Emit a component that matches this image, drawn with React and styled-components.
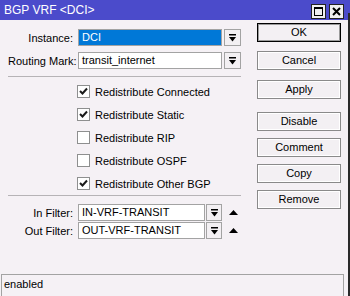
import React from "react";
import styled, { createGlobalStyle } from "styled-components";

const GlobalStyle = createGlobalStyle`
  html, body {
    margin: 0;
    padding: 0;
    background: #f5f1f5;
    font-family: "Liberation Sans", Arial, sans-serif;
    font-size: 11px;
    color: #000;
    overflow: hidden;
  }
`;

const Screen = styled.div`
  display: flex;
  width: 350px;
  height: 296px;
  overflow: hidden;
`;

const Window = styled.div`
  width: 348px;
  display: flex;
  flex-direction: column;
  background: #f5f1f5;
`;

const EdgeStrip = styled.div`
  width: 2px;
  background: linear-gradient(#4b4bcb 13px, #2a2a2a 13px);
`;

const TitleBar = styled.div`
  height: 20px;
  flex: none;
  background: #4b4bcb;
  color: #fff;
  display: flex;
  align-items: center;
  padding-left: 4px;
  font-size: 12px;
  .title {
    flex: 1;
  }
`;

const TitleButton = styled.div`
  width: 13px;
  height: 13px;
  margin-right: 3px;
  margin-top: 2px;
  background: #f0f0f0;
  border: 1px solid #222;
  display: flex;
  align-items: center;
  justify-content: center;
  &:last-child {
    margin-right: 4px;
  }
`;

const Body = styled.div`
  flex: 1;
  display: flex;
`;

const Form = styled.div`
  width: 241px;
  padding: 9px 0 0 8px;
  display: flex;
  flex-direction: column;
`;

const FieldRow = styled.div`
  display: flex;
  align-items: center;
  height: 17px;
  margin-bottom: ${(p) => p.gap || 0}px;
`;

const Label = styled.div`
  width: 65px;
  text-align: right;
  margin-right: 5px;
  white-space: nowrap;
`;

const Input = styled.div`
  box-sizing: border-box;
  width: ${(p) => p.width}px;
  height: 17px;
  border: 1px solid #a3a3a3;
  background: ${(p) => (p.selected ? "#0078d7" : "#fff")};
  color: ${(p) => (p.selected ? "#fff" : "#000")};
  padding-left: 3px;
  line-height: 15px;
  white-space: nowrap;
`;

const DropButton = styled.div`
  box-sizing: border-box;
  width: ${(p) => p.width || 17}px;
  height: 17px;
  margin-left: ${(p) => (p.tight ? 1 : 2)}px;
  border: 1px solid #a3a3a3;
  background: #f3f0f3;
  display: flex;
  align-items: center;
  justify-content: center;
`;

const Separator = styled.div`
  height: 1px;
  width: 233px;
  background: #b6b3b6;
`;

const CheckList = styled.div`
  display: flex;
  flex-direction: column;
  padding: 3px 0 0 69px;
  height: 115px;
`;

const CheckRow = styled.div`
  display: flex;
  align-items: center;
  height: 23px;
`;

const Box = styled.div`
  box-sizing: border-box;
  width: 13px;
  height: 13px;
  border: 1px solid #8e8f8f;
  background: #fff;
  margin-right: 5px;
  display: flex;
  align-items: center;
  justify-content: center;
`;

const FilterRows = styled.div`
  display: flex;
  flex-direction: column;
  padding-top: 8px;
  gap: 1px;
`;

const UpArrow = styled.div`
  margin-left: 7px;
  display: flex;
  align-items: center;
`;

const ButtonColumn = styled.div`
  width: 84px;
  margin-left: 8px;
  padding-top: 3px;
  display: flex;
  flex-direction: column;
`;

const Button = styled.div`
  box-sizing: border-box;
  height: 19px;
  margin-bottom: ${(p) => p.gap}px;
  border: 1px solid ${(p) => (p.primary ? "#000" : "#8a8a8a")};
  box-shadow: inset 0 0 0 1px ${(p) => (p.primary ? "#9a9a9a" : "#fff")};
  background: #f3f0f3;
  text-align: center;
  line-height: 17px;
`;

const StatusBar = styled.div`
  box-sizing: border-box;
  height: 22px;
  width: 343px;
  margin-left: 1px;
  border: 1px solid #a3a3a3;
  border-bottom: none;
  padding: 3px 0 0 2px;
  flex: none;
`;

const DropIcon = () => (
  <svg width="7" height="8" viewBox="0 0 7 8">
    <rect x="0" y="0" width="7" height="1.5" fill="#000" />
    <polygon points="0,3 7,3 3.5,7.5" fill="#000" />
  </svg>
);

const Check = () => (
  <svg width="9" height="9" viewBox="0 0 9 9">
    <polyline
      points="1,4 3.5,6.5 8,1.5"
      fill="none"
      stroke="#1a1a1a"
      strokeWidth="2"
    />
  </svg>
);

const checks = [
  { label: "Redistribute Connected", on: true },
  { label: "Redistribute Static", on: true },
  { label: "Redistribute RIP", on: false },
  { label: "Redistribute OSPF", on: false },
  { label: "Redistribute Other BGP", on: true },
];

const buttons = [
  { label: "OK", gap: 9, primary: true },
  { label: "Cancel", gap: 10 },
  { label: "Apply", gap: 13 },
  { label: "Disable", gap: 7 },
  { label: "Comment", gap: 7 },
  { label: "Copy", gap: 7 },
  { label: "Remove", gap: 0 },
];

const filters = [
  { label: "In Filter:", value: "IN-VRF-TRANSIT" },
  { label: "Out Filter:", value: "OUT-VRF-TRANSIT" },
];

export default function App() {
  return (
    <Screen>
      <GlobalStyle />
      <Window>
        <TitleBar>
          <span className="title">BGP VRF &lt;DCI&gt;</span>
          <TitleButton>
            <svg width="9" height="9" viewBox="0 0 9 9">
              <rect x="0.5" y="0.5" width="8" height="8" fill="none" stroke="#000" />
              <rect x="0" y="0" width="9" height="2" fill="#000" />
            </svg>
          </TitleButton>
          <TitleButton>
            <svg width="9" height="9" viewBox="0 0 9 9">
              <path d="M1 1 L8 8 M8 1 L1 8" stroke="#000" strokeWidth="2" />
            </svg>
          </TitleButton>
        </TitleBar>
        <Body>
          <Form>
            <FieldRow gap={6}>
              <Label>Instance:</Label>
              <Input width={144} selected>
                DCI
              </Input>
              <DropButton>
                <DropIcon />
              </DropButton>
            </FieldRow>
            <FieldRow gap={7}>
              <Label>Routing Mark:</Label>
              <Input width={144}>transit_internet</Input>
              <DropButton>
                <DropIcon />
              </DropButton>
            </FieldRow>
            <Separator />
            <CheckList>
              {checks.map((c) => (
                <CheckRow key={c.label}>
                  <Box>{c.on && <Check />}</Box>
                  {c.label}
                </CheckRow>
              ))}
            </CheckList>
            <Separator />
            <FilterRows>
              {filters.map((f) => (
                <FieldRow key={f.label}>
                  <Label>{f.label}</Label>
                  <Input width={127}>{f.value}</Input>
                  <DropButton width={16} tight>
                    <DropIcon />
                  </DropButton>
                  <UpArrow>
                    <svg width="9" height="5" viewBox="0 0 9 5">
                      <polygon points="0,5 9,5 4.5,0" fill="#000" />
                    </svg>
                  </UpArrow>
                </FieldRow>
              ))}
            </FilterRows>
          </Form>
          <ButtonColumn>
            {buttons.map((b) => (
              <Button key={b.label} gap={b.gap} primary={b.primary}>
                {b.label}
              </Button>
            ))}
          </ButtonColumn>
        </Body>
        <StatusBar>enabled</StatusBar>
      </Window>
      <EdgeStrip />
    </Screen>
  );
}
